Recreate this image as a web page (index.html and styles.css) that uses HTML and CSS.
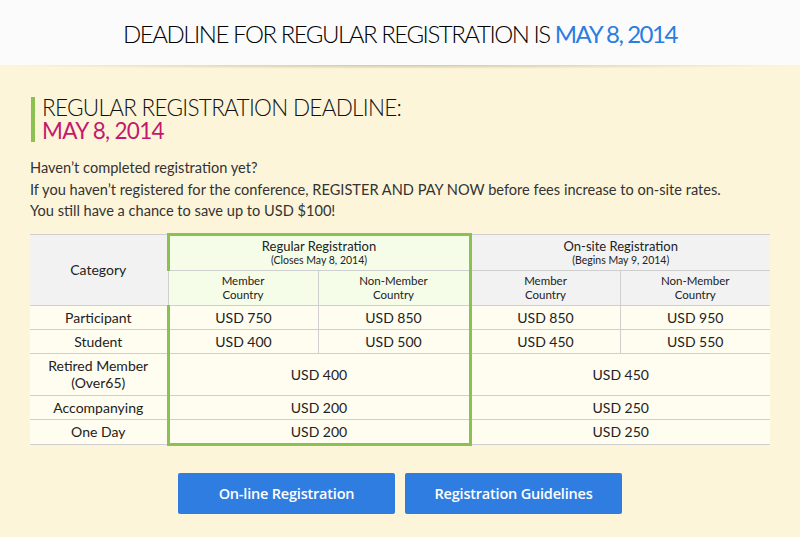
FILE: index.html
```html
<!DOCTYPE html>
<html>
<head>
<meta charset="utf-8">
<link rel="stylesheet" href="styles.css">
</head>
<body>
<header class="top">
  <h1 class="top-title">DEADLINE FOR REGULAR REGISTRATION IS <span class="blue">MAY 8, 2014</span></h1>
</header>
<div class="shade"></div>
<main class="content">
  <h2 class="deadline">
    <span class="dl-line">REGULAR REGISTRATION DEADLINE:</span>
    <span class="dl-line dl-date">MAY 8, 2014</span>
  </h2>
  <p class="intro">Haven’t completed registration yet?<br>If you haven’t registered for the conference, REGISTER AND PAY NOW before fees increase to on-site rates.<br>You still have a chance to save up to USD $100!</p>
  <table class="fees">
    <colgroup>
      <col class="c-cat"><col class="c-val"><col class="c-val2"><col class="c-val"><col class="c-val">
    </colgroup>
    <thead>
      <tr class="h1">
        <th rowspan="2" class="cat-h">Category</th>
        <th colspan="2" class="reg-h g-top g-left g-right">Regular Registration<small>(Closes May 8, 2014)</small></th>
        <th colspan="2" class="on-h">On-site Registration<small>(Begins May 9, 2014)</small></th>
      </tr>
      <tr class="h2">
        <th class="reg-sub g-left">Member<br>Country</th>
        <th class="reg-sub g-right">Non-Member<br>Country</th>
        <th class="on-sub">Member<br>Country</th>
        <th class="on-sub">Non-Member<br>Country</th>
      </tr>
    </thead>
    <tbody>
      <tr>
        <td>Participant</td>
        <td class="g-left">USD 750</td><td class="g-right">USD 850</td>
        <td>USD 850</td><td>USD 950</td>
      </tr>
      <tr>
        <td>Student</td>
        <td class="g-left">USD 400</td><td class="g-right">USD 500</td>
        <td>USD 450</td><td>USD 550</td>
      </tr>
      <tr class="tall">
        <td>Retired Member<br>(Over65)</td>
        <td colspan="2" class="g-left g-right">USD 400</td>
        <td colspan="2">USD 450</td>
      </tr>
      <tr>
        <td>Accompanying</td>
        <td colspan="2" class="g-left g-right">USD 200</td>
        <td colspan="2">USD 250</td>
      </tr>
      <tr>
        <td>One Day</td>
        <td colspan="2" class="g-left g-right g-bottom">USD 200</td>
        <td colspan="2">USD 250</td>
      </tr>
    </tbody>
  </table>
  <div class="actions">
    <a class="btn" href="#">On-line Registration</a>
    <a class="btn" href="#">Registration Guidelines</a>
  </div>
</main>
</body>
</html>
```

FILE: styles.css
```css
html, body {
  margin: 0;
  padding: 0;
}
body {
  background: #fdf5d9;
  font-family: "Lato", "Open Sans", sans-serif;
  color: #333;
  width: 800px;
  height: 537px;
  overflow: hidden;
}
.top {
  height: 65px;
  background: #fbfbfc;
  display: flex;
  align-items: center;
  justify-content: center;
}
.top-title {
  margin: 0;
  font-weight: 300;
  font-size: 24px;
  color: #000;
  letter-spacing: -1.45px;
  padding-top: 1px;
}
.blue {
  color: #2a7de1;
  font-weight: 400;
}
.shade {
  height: 4px;
  background: radial-gradient(ellipse 50% 100% at 50% 0%, rgba(175, 160, 120, 0.55), rgba(175, 160, 120, 0) 100%);
}
.content {
  padding: 28px 30px 0 30px;
}
.deadline {
  margin: 0 0 0 1px;
  border-left: 4px solid #8bc152;
  padding-left: 7px;
  font-weight: 300;
  font-size: 22.5px;
  line-height: 22.5px;
  color: #111;
  display: flex;
  flex-direction: column;
}
.dl-line {
  display: block;
  letter-spacing: -0.7px;
}
.dl-date {
  color: #c4186f;
  font-weight: 400;
}
.intro {
  margin: 15px 0 0 0;
  font-size: 14.6px;
  line-height: 21.5px;
  color: #333;
}
.fees {
  margin-top: 11px;
  width: 740px;
  border-collapse: collapse;
  font-size: 14px;
  color: #222;
  text-align: center;
}
.c-cat { width: 138px; }
.c-val { width: 150px; }
.c-val2 { width: 152px; }
.fees th, .fees td {
  border: 1px solid #cfcfcf;
  padding: 0;
  font-weight: 400;
}
.fees tr > :first-child { border-left: 0; }
.fees tr > :last-child { border-right: 0; }
.fees thead th {
  background: #f2f2f2;
}
.fees th small {
  display: block;
  font-size: 10.5px;
  line-height: 13px;
}
.h1 th {
  height: 34px;
  font-size: 13px;
  line-height: 16px;
}
.cat-h {
  font-size: 14px !important;
}
.h2 th {
  height: 34px;
  font-size: 11.5px;
  line-height: 14px;
}
.fees thead th.reg-h,
.fees thead th.reg-sub {
  background: #f5fde9;
}
.fees tbody td {
  background: #fffcf0;
  height: 23px;
}
.fees tbody tr.tall td {
  height: 41px;
  line-height: 17px;
}
.fees .g-left { border-left: 3px solid #8bc152; }
.fees .g-right { border-right: 3px solid #8bc152; }
.fees .g-top { border-top: 3px solid #8bc152; }
.fees .g-bottom { border-bottom: 3px solid #8bc152; }
.actions {
  display: flex;
  justify-content: center;
  gap: 10px;
  margin-top: 27px;
}
.btn {
  width: 217px;
  height: 41px;
  display: flex;
  align-items: center;
  justify-content: center;
  background: #2f7de0;
  border-radius: 2px;
  color: #fff;
  font-family: "Open Sans", sans-serif;
  font-weight: 600;
  font-size: 14.5px;
  text-decoration: none;
  letter-spacing: -0.2px;
}
```
